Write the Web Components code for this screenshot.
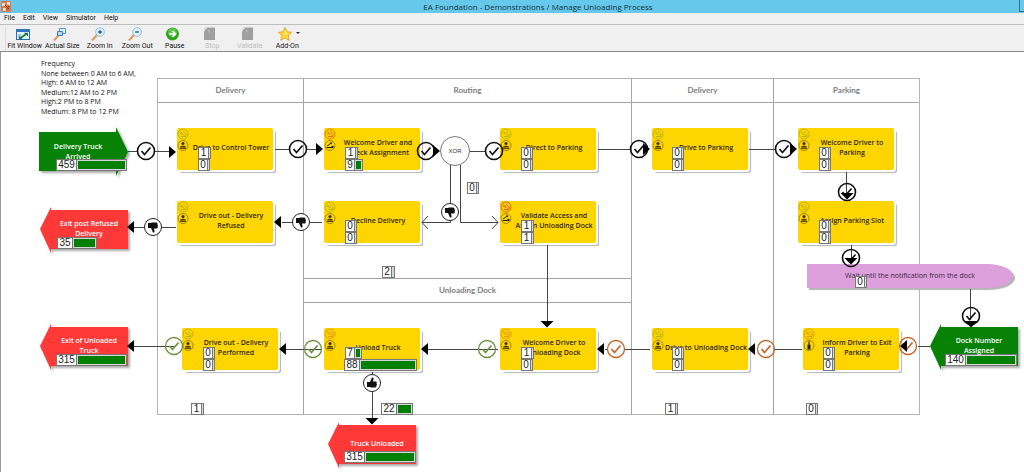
<!DOCTYPE html>
<html lang="en">
<head>
<meta charset="utf-8">
<title>EA Foundation - Demonstrations / Manage Unloading Process</title>
<style>
html,body{margin:0;height:100%}
body{font-family:"Open Sans","Noto Sans",sans-serif;background:#fff}
</style>
</head>
<body>
<sim-app></sim-app>
<script>
const define = (name, html) => customElements.define(name, class extends HTMLElement {
  connectedCallback() {
    if (this.shadowRoot) return;
    this.attachShadow({mode: 'open'}).innerHTML = typeof html === 'function' ? html(this) : html;
    // free-canvas items carry their place as x, y, w, h
    if (this.hasAttribute('x')) {
      this.style.position = 'absolute';
      this.style.left = this.getAttribute('x') + 'px';
      this.style.top = this.getAttribute('y') + 'px';
      if (this.hasAttribute('w')) this.style.width = this.getAttribute('w') + 'px';
      if (this.hasAttribute('h')) this.style.height = this.getAttribute('h') + 'px';
    }
  }
});

const ICONS = {
  fit: '<rect x=".5" y="2.5" width="13" height="10" fill="#e4f2fb" stroke="#2b68ad"/><path d="M0 2h14v3H0z" fill="#2f73c0"/><path d="M2 7h3v4H2z" fill="#9cc7e6"/><path d="M4 11.5L10 7" stroke="#1d7a35" stroke-width="1.6"/><path d="M8 5.8h4v3.6zM3 9v3h3.5z" fill="#1d7a35"/>',
  actual: '<path d="M1 13.500l4.500-5" stroke="#d79a5f" stroke-width="2"/><path d="M6.500 1.500h6v5h-6z" fill="#dff0fb" stroke="#5b93cc"/><path d="M4.500 4.500h5v4h-5z" fill="#b9daf2" stroke="#3f7cbc"/>',
  zoomin: '<path d="M1 13.500l5-5.500" stroke="#d79a5f" stroke-width="2"/><circle cx="9" cy="5" r="4.300" fill="#e3f3fd" stroke="#8fbadf"/><path d="M9 3.200v3.600M7.200 5h3.600" stroke="#174c8c" stroke-width="1.300"/>',
  zoomout: '<path d="M1 13.500l5-5.500" stroke="#d79a5f" stroke-width="2"/><circle cx="9" cy="5" r="4.300" fill="#e3f3fd" stroke="#8fbadf"/><path d="M7.200 5h3.600" stroke="#174c8c" stroke-width="1.300"/>',
  pause: '<circle cx="6.500" cy="7" r="6.500" fill="#2ea31f"/><circle cx="6.500" cy="5.500" r="4.500" fill="#5fc44c"/><path d="M3 7h6M6.500 4l3 3-3 3" fill="none" stroke="#fff" stroke-width="1.700"/>',
  off: '<path d="M2 .5h10v12.500H1V2z" fill="#a0a0a0"/><path d="M1 .5h3.500L1 4.500z" fill="#e2e2e2"/><path d="M5 3l2 2.500" stroke="#c8c8c8"/>',
  star: '<path d="M7 .5l2 4.300 4.700.5-3.500 3.200 1 4.800L7 10.900l-4.200 2.400 1-4.800L.3 5.300 5 4.800z" fill="#ffd83a" stroke="#d79c19" stroke-width=".8"/><path d="M7 2.800l1.200 3 3 .3-4.200 1z" fill="#fff3a8"/>'
};

define('sim-titlebar', `<style>
:host{display:grid;grid-template-columns:1fr auto 1fr;align-items:center;height:13px;background:#66c9ec;color:#12303c;font-size:8px}
h1{margin:0;font:inherit;line-height:13px;padding-left:52px;white-space:nowrap}
svg{width:10px;height:11px;margin-left:1px;display:block}
button{justify-self:end;align-self:start;width:5px;height:12px;padding:0;border:1px solid #34738b;border-width:0 0 1px 1px;background:none}
</style><svg viewBox="0 0 10 11"><rect width="10" height="11" rx="1" fill="#d9784a"/><path d="M1 2h3v3H1zM6 1h3v3H6zM2 7h3v3H2z" fill="#f8dcc6"/><path d="M4 4l4 4M8 5L5 9" stroke="#8f3a1c"/></svg><h1><slot></slot></h1><button aria-label="Minimize"></button>`);

define('sim-menubar', `<style>
:host{display:block;height:11px;background:#f0f0f0;border-bottom:1px solid #bdbdbd}
nav{display:flex;gap:8px;padding-left:4px}
button{all:unset;font:7px/11px Roboto,"Open Sans",sans-serif;color:#111}
</style><nav><button>File</button><button>Edit</button><button>View</button><button>Simulator</button><button>Help</button></nav>`);

define('sim-tool', el => `<style>
:host{display:block;min-width:0}
button{all:unset;display:flex;flex-direction:column;align-items:center;width:100%;font:7px/10px Roboto,"Open Sans",sans-serif;color:#111;white-space:nowrap}
button:disabled{color:#bdbdbd}
svg{width:14px;height:14px;display:block;grid-column:2;grid-row:1}
.i{display:grid;grid-template-columns:8px 14px 8px;margin-right:4px}
.c{width:0;border:2px solid transparent;border-top-color:#222;align-self:center;justify-self:end;grid-column:3;grid-row:1}
</style><button ${el.hasAttribute('off') ? 'disabled' : ''}><span class="i"><svg viewBox="0 0 14 14">${ICONS[el.getAttribute('icon')]}</svg>${el.hasAttribute('menu') ? '<i class="c"></i>' : ''}</span><span><slot></slot></span></button>`);

define('sim-toolbar', `<style>
:host{display:block;background:#f0f0f0;border-bottom:1px solid #8a8a8a;padding:2px 0 0 2px}
div{display:grid;grid-template-columns:repeat(8,1fr);width:300px;margin-left:3px;border-left:1px solid #ddd}
</style><div><sim-tool icon="fit">Fit Window</sim-tool><sim-tool icon="actual">Actual Size</sim-tool><sim-tool icon="zoomin">Zoom In</sim-tool><sim-tool icon="zoomout">Zoom Out</sim-tool><sim-tool icon="pause">Pause</sim-tool><sim-tool icon="off" off>Stop</sim-tool><sim-tool icon="off" off>Validate</sim-tool><sim-tool icon="star" menu>Add-On</sim-tool></div>`);

define('sim-notes', `<style>
:host{display:flex;flex-direction:column;justify-content:space-between;font-size:7px;line-height:9px;color:#111;white-space:nowrap}
</style><slot></slot>`);

// swimlane table behind the flow
define('sim-lanes', `<style>
:host{display:grid;grid-template-columns:145px 328px 142px 1fr;box-sizing:border-box;border:1px solid #b4b4b4;font:bold 8px/23px Lato,sans-serif;color:#7d7d7d;text-align:center}
section{border-left:1px solid #a5a5a5;display:flex;flex-direction:column}
section:first-of-type{border-left:0}
h2{margin:0;font:inherit;border-bottom:1px solid #a5a5a5}
.gap{height:175px;border-bottom:1px solid #a5a5a5}
</style><section><h2>Delivery</h2></section><section><h2>Routing</h2><div class="gap"></div><h2>Unloading Dock</h2></section><section><h2>Delivery</h2></section><section><h2>Parking</h2></section>`);

const ROLE = {
  person: '<circle cx="6" cy="3.500" r="1.500" fill="#332b00"/><path d="M3 8.500q0-3 3-3t3 3z" fill="#8a7200"/><path d="M3.500 6.500h5M3 8.500h6" stroke="#4a3e00" stroke-width=".8"/>',
  desk: '<path d="M2.500 7.500h6M3 6l3-2" stroke="#222" stroke-width="1"/><circle cx="7" cy="3.200" r="1" fill="#222"/><circle cx="8.500" cy="7" r="1.200" fill="#222"/>',
  lock: '<path d="M4.500 4.500h3v5h-3z" fill="#222"/><path d="M6 1.500v3" stroke="#222" stroke-width="1.200"/>'
};
define('sim-task', el => {
  const c = el.getAttribute('tone') || '#a9ac10';
  return `<style>
:host{display:grid;grid-template-columns:12px 1fr;width:96px;height:42px;background:#ffd500;border-radius:2px;box-shadow:1px 1px 0 1px #fff,3px 3px 1px 0 #b5b5bd;font-size:7px;line-height:10px;font-weight:600;color:#2e2708;text-align:center}
svg{width:12px;height:24px;display:block}
div{align-self:center;white-space:nowrap;justify-self:center;padding-bottom:2px}
</style><svg viewBox="0 0 12 24"><g fill="none" stroke="${c}" stroke-width=".8"><circle cx="6" cy="6" r="5"/><path d="M3 3.500l3 2.500M3 5.500q3 0 4.500 2M4 8.500h5M6 3l3 3v2"/></g><g transform="translate(0 12)"><circle cx="6" cy="5.500" r="5" fill="none" stroke="#8a7000" stroke-width=".8"/>${ROLE[el.getAttribute('role-icon') || 'person']}</g></svg><div><slot></slot></div>`;
});

define('sim-event', el => {
  const out = el.getAttribute('dir') === 'right', w = +el.getAttribute('w');
  const p = out ? 'M0 5H77V0L89 25 77 49V44H0z' : `M0 22L11 0V3H${w}V42H11V46z`;
  const f = el.getAttribute('fill');
  return `<style>
:host{display:grid;grid-template:50px/100%;align-items:center;justify-items:center;font-size:7px;line-height:10px;font-weight:600;color:#fff;text-align:center;height:50px}
svg{grid-area:1/1;width:100%;height:50px;overflow:visible;filter:drop-shadow(2px 2px 1px #aaa)}
div{grid-area:1/1;z-index:1;padding:0 0 7px 10px;white-space:nowrap}
:host([dir=right]) div{padding:0 12px 0 0}
</style><svg><path d="${p}" fill="${f}"/></svg><div><slot></slot></div>`;
});

define('sim-wait', `<style>
:host{display:flex;align-items:center;justify-content:center;background:#dda0dd;border-radius:0 26px 26px 0/0 12px 12px 0;box-shadow:2px 2px 1px #b5b5b5;font-size:7px;line-height:10px;color:#3a2840;white-space:nowrap}
</style><span><slot></slot></span>`);

define('sim-xor', `<style>
:host{display:grid;place-items:center;box-sizing:border-box;border:1px solid #777;border-radius:50%;background:#fff;font:6px/8px "Liberation Sans",sans-serif;color:#333}
</style><slot></slot>`);

// queue counter: number plus a bar of its load
define('sim-count', el => `<style>
:host{display:flex;box-sizing:border-box;height:12px;border:1px solid #777;background:#d6d6d6;font:10px/10px "Liberation Sans",sans-serif;color:#222}
b{font-weight:400;background:#fff;width:${el.getAttribute('label')}px;text-align:center;border-right:1px solid #777;flex:none}
i{background:#008000;width:${el.getAttribute('bar') || 0}px;margin:1px}
</style><b><slot></slot></b><i></i>`);

const line = d => `<path d="${d}" fill="none" stroke="#444" stroke-width="1"/>`;
const HEAD = {r: 'M0-6L7 0 0 6z', l: 'M0-6L-7 0 0 6z', d: 'M-6.500 0H6.500L0 6.500z'};
const head = (x, y, k) => `<path transform="translate(${x} ${y})" d="${HEAD[k]}" fill="#000"/>`;
const check = (x, y, c = '#111', w = 1.6) => `<g transform="translate(${x} ${y})" fill="none" stroke="${c}"><circle r="8.500" stroke-width="${w}"/><path d="M-4.500 0L-1.500 3.500 4.500-3.500" stroke-width="1.700"/></g>`;
const thumb = (x, y, up) => `<g transform="translate(${x} ${y})"><circle r="8.500" fill="#fff" stroke="#222"/><path transform="${up ? 'scale(1)' : 'rotate(180) scale(-1 1)'}" d="M-5-1h3L0-5.500q2-.5 1.500 1.500L1-1.500h3q1.500 1 .5 2 1 1 0 2 .3 1.500-1 2H-1L-2 4h-3z" fill="#111"/></g>`;
const G = '#6f8f3c', O = '#c4662a';

define('sim-links', `<style>
:host{display:block;position:absolute;inset:0 0 0 -1px}
svg{width:100%;height:100%;display:block;overflow:visible}
</style><svg aria-hidden="true">
${line('M128 99.500H137M154 99.500H172M275 97.500H290M306 97.500H320M470 99.500H486M598 97.500H631M749 97.500H776M846.500 120V146M851.500 193V210M970.500 237V268M918 294.500H930M775 297.500H802M605 297.500H608M624 297.500H650M427 297.500H498M285 297.500H322M134 294.500H174M134 175.500H176M282 170.500H322M547.500 193V270')}
${line('M450.500 113V170.500H422M428 164L422 170.500 428 177M460.500 113V170.500H498M492 164L498 170.500 492 177')}
${line('M372.500 320V368')}
${check(146, 99)}${check(298, 97)}${check(426, 99)}${check(494, 99)}${check(639, 97)}${check(784, 97)}${check(847, 140)}${check(851, 206)}${check(971, 264)}
${check(908, 294, O, 1.3)}${check(766, 297, O, 1.3)}${check(616, 297, O, 1.3)}${check(487, 297, G, 1.3)}${check(313, 297, G, 1.3)}${check(174, 294, G, 1.3)}
${thumb(153, 175)}${thumb(301, 170)}${thumb(450, 160)}${thumb(372, 331, 1)}
${head(169, 100, 'r')}${head(316, 97, 'r')}${head(433, 99, 'r')}${head(643, 97, 'r')}${head(790, 97, 'r')}
${head(847, 141, 'd')}${head(851, 206, 'd')}${head(971, 269, 'd')}${head(547, 269, 'd')}${head(372, 366, 'd')}
${head(907, 294, 'l')}${head(755, 297, 'l')}${head(604, 297, 'l')}${head(428, 297, 'l')}${head(286, 297, 'l')}${head(134, 294, 'l')}${head(134, 175, 'l')}${head(281, 170, 'l')}
</svg>`);

define('sim-canvas', `<style>
:host{display:block;position:relative;flex:1;min-height:420px;overflow:hidden;background:#fff;border-left:1px solid #999}
</style>
<sim-notes x="40" y="7" h="57"><span>Frequency</span><span>None between 0 AM to 6 AM,</span><span>High: 6 AM to 12 AM</span><span>Medium:12 AM to 2 PM</span><span>High:2 PM to 8 PM</span><span>Medium: 8 PM to 12 PM</span></sim-notes>
<sim-lanes x="156" y="26" w="763" h="337"></sim-lanes>
<sim-task x="176" y="76">Drive to Control Tower</sim-task>
<sim-task x="323" y="76" tone="#d9650a" role-icon="desk">Welcome Driver and<br>Check Assignment</sim-task>
<sim-task x="499" y="76">Direct to Parking</sim-task>
<sim-task x="651" y="76">Drive to Parking</sim-task>
<sim-task x="797" y="76">Welcome Driver to<br>Parking</sim-task>
<sim-task x="176" y="149">Drive out - Delivery<br>Refused</sim-task>
<sim-task x="323" y="149">Decline Delivery</sim-task>
<sim-task x="499" y="149" tone="#d9450a" role-icon="desk">Validate Access and<br>Assign Unloading Dock</sim-task>
<sim-task x="797" y="149">Assign Parking Slot</sim-task>
<sim-task x="181" y="276">Drive out - Delivery<br>Performed</sim-task>
<sim-task x="323" y="276" tone="#e08a00">Unload Truck</sim-task>
<sim-task x="499" y="276" tone="#e08a00">Welcome Driver to<br>Unloading Dock</sim-task>
<sim-task x="651" y="276">Drive to Unloading Dock</sim-task>
<sim-task x="802" y="276" tone="#e08a00" role-icon="lock">Inform Driver to Exit<br>Parking</sim-task>
<sim-event x="38" y="75" w="90" dir="right" fill="#078207">Delivery Truck<br>Arrived</sim-event>
<sim-event x="39" y="155" w="88" fill="#ff3838">Exit post Refused<br>Delivery</sim-event>
<sim-event x="39" y="272" w="88" fill="#ff3838">Exit of Unloaded<br>Truck</sim-event>
<sim-event x="327" y="370" w="88" fill="#ff3838">Truck Unloaded</sim-event>
<sim-event x="929" y="272" w="88" fill="#078207">Dock Number<br>Assigned</sim-event>
<sim-wait x="806" y="212" w="206" h="24">Wait until the notification from the dock</sim-wait>
<sim-links></sim-links>
<sim-xor x="439" y="84" w="30" h="30">XOR</sim-xor>
<sim-count x="55" y="107" w="71" label="19" bar="48">459</sim-count>
<sim-count x="56" y="185" w="40" label="14" bar="22">35</sim-count>
<sim-count x="55" y="302" w="71" label="19" bar="48">315</sim-count>
<sim-count x="197" y="95" w="13" label="9" bar="1">1</sim-count>
<sim-count x="197" y="107" w="12" label="8">0</sim-count>
<sim-count x="344" y="95" w="13" label="9" bar="1">1</sim-count>
<sim-count x="344" y="107" w="18" label="8" bar="5">9</sim-count>
<sim-count x="520" y="95" w="12" label="8">0</sim-count>
<sim-count x="520" y="107" w="12" label="8">0</sim-count>
<sim-count x="671" y="95" w="12" label="8">0</sim-count>
<sim-count x="671" y="107" w="12" label="8">0</sim-count>
<sim-count x="818" y="95" w="12" label="8">0</sim-count>
<sim-count x="818" y="107" w="12" label="8">0</sim-count>
<sim-count x="344" y="168" w="12" label="8">0</sim-count>
<sim-count x="344" y="180" w="12" label="8">0</sim-count>
<sim-count x="520" y="168" w="13" label="9" bar="1">1</sim-count>
<sim-count x="520" y="180" w="13" label="9" bar="1">1</sim-count>
<sim-count x="818" y="168" w="12" label="8">0</sim-count>
<sim-count x="818" y="180" w="12" label="8">0</sim-count>
<sim-count x="466" y="130" w="12" label="8">0</sim-count>
<sim-count x="854" y="224" w="12" label="8">0</sim-count>
<sim-count x="381" y="214" w="13" label="8" bar="1">2</sim-count>
<sim-count x="202" y="295" w="12" label="8">0</sim-count>
<sim-count x="202" y="307" w="12" label="8">0</sim-count>
<sim-count x="344" y="295" w="17" label="8" bar="4">7</sim-count>
<sim-count x="343" y="307" w="73" label="14" bar="54">88</sim-count>
<sim-count x="520" y="295" w="13" label="9" bar="1">1</sim-count>
<sim-count x="520" y="307" w="12" label="8">0</sim-count>
<sim-count x="671" y="295" w="12" label="8">0</sim-count>
<sim-count x="671" y="307" w="12" label="8">0</sim-count>
<sim-count x="822" y="295" w="12" label="8">0</sim-count>
<sim-count x="822" y="307" w="12" label="8">0</sim-count>
<sim-count x="944" y="302" w="72" label="19" bar="49">140</sim-count>
<sim-count x="190" y="351" w="13" label="9" bar="1">1</sim-count>
<sim-count x="380" y="351" w="32" label="14" bar="13">22</sim-count>
<sim-count x="664" y="351" w="13" label="9" bar="1">1</sim-count>
<sim-count x="805" y="351" w="12" label="8">0</sim-count>
<sim-count x="343" y="399" w="72" label="19" bar="49">315</sim-count>`);

define('sim-app', `<style>
:host{display:flex;flex-direction:column;min-height:100vh}
</style>
<sim-titlebar>EA Foundation - Demonstrations / Manage Unloading Process</sim-titlebar>
<sim-menubar></sim-menubar><sim-toolbar></sim-toolbar><sim-canvas></sim-canvas>`);
</script>
</body>
</html>
